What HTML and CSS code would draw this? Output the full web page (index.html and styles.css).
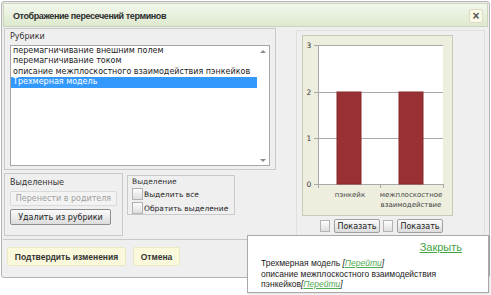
FILE: index.html
```html
<!DOCTYPE html>
<html lang="ru">
<head>
    <meta charset="UTF-8">
    <title>Отображение пересечений терминов</title>
    <link rel="stylesheet" href="styles.css">
</head>
<body>
    <div class="dialog">
        <div class="titlebar">
            <span class="title">Отображение пересечений терминов</span>
            <span class="close">&times;</span>
        </div>
        <div class="dialog-body">
            <div class="main">
                <div class="left">
                    <div class="box rubrics">
                        <div class="box-title">Рубрики</div>
                        <div class="listbox">
                            <ul class="items">
                                <li>перемагничивание внешним полем</li>
                                <li>перемагничивание током</li>
                                <li>описание межплоскостного взаимодействия пэнкейков</li>
                                <li class="selected">Трехмерная модель</li>
                            </ul>
                            <div class="scrollbar">
                                <span class="arrow up"></span>
                                <span class="arrow down"></span>
                            </div>
                        </div>
                    </div>
                    <div class="lower">
                        <div class="box picked">
                            <div class="box-title">Выделенные</div>
                            <button class="btn disabled">Перенести в родителя</button>
                            <button class="btn remove">Удалить из рубрики</button>
                        </div>
                        <div class="box selection">
                            <div class="box-title small">Выделение</div>
                            <label class="check-row"><span class="check"></span>Выделить все</label>
                            <label class="check-row"><span class="check"></span>Обратить выделение</label>
                        </div>
                    </div>
                </div>
                <div class="right">
                    <div class="chart">
                        <svg width="149" height="179" viewBox="0 0 149 179">
                            <rect x="15" y="9" width="125" height="139" fill="#fff"/>
                            <g stroke="#a9a9a9" stroke-width="1">
                                <line x1="11" y1="9.5" x2="140" y2="9.5"/>
                                <line x1="11" y1="56.5" x2="140" y2="56.5"/>
                                <line x1="11" y1="102.5" x2="140" y2="102.5"/>
                                <line x1="11" y1="148.5" x2="140" y2="148.5"/>
                                <line x1="15.5" y1="9" x2="15.5" y2="152"/>
                                <line x1="77.5" y1="148" x2="77.5" y2="152"/>
                                <line x1="140.5" y1="148" x2="140.5" y2="152"/>
                            </g>
                            <rect x="34" y="56" width="24" height="92" fill="#993034" stroke="#862a2d" stroke-width="1"/>
                            <rect x="96" y="56" width="24" height="92" fill="#993034" stroke="#862a2d" stroke-width="1"/>
                            <g class="axis-y">
                                <text x="6" y="12">3</text>
                                <text x="6" y="59">2</text>
                                <text x="6" y="105">1</text>
                                <text x="6" y="151">0</text>
                            </g>
                            <g class="axis-x">
                                <text x="47" y="161">пэнкейк</text>
                                <text x="108" y="161">межплоскостное</text>
                                <text x="108" y="171">взаимодействие</text>
                            </g>
                        </svg>
                    </div>
                    <div class="chart-controls">
                        <span class="check"></span>
                        <button class="btn show">Показать</button>
                        <span class="check"></span>
                        <button class="btn show">Показать</button>
                    </div>
                </div>
            </div>
            <div class="actions">
                <button class="action confirm">Подтвердить изменения</button>
                <button class="action cancel">Отмена</button>
            </div>
        </div>
    </div>

    <div class="popup">
        <div class="popup-head"><a class="close-link">Закрыть</a></div>
        <div class="popup-text">
            Трехмерная модель <span class="goto">[<a>Перейти</a>]</span><br>
            описание межплоскостного взаимодействия<br>
            пэнкейков<span class="goto">[<a>Перейти</a>]</span>
        </div>
    </div>
</body>
</html>
```

FILE: styles.css
```css
* {
    margin: 0;
    padding: 0;
    box-sizing: border-box;
}

body {
    font-family: "DejaVu Sans", Verdana, sans-serif;
    font-size: 8px;
    color: #333;
    background-color: #fff;
}

.dialog {
    margin: 1px 0 0 1px;
    width: 489px;
    height: 277px;
    padding: 1px;
    border: 1px solid #b4b4b4;
    border-radius: 3px;
    background-color: #efefef;
}

.titlebar {
    height: 24px;
    display: flex;
    align-items: center;
    justify-content: space-between;
    padding: 0 4px 0 9px;
    border: 1px solid #c9d6bb;
    background: linear-gradient(#f3f8ec, #dde9ce);
}

.title {
    margin-top: 1px;
    font-family: "Liberation Sans", Arial, sans-serif;
    font-weight: bold;
    font-size: 9px;
    letter-spacing: -0.4px;
    color: #2e2e2e;
}

.close {
    width: 14px;
    height: 14px;
    margin-top: 2px;
    display: flex;
    align-items: center;
    justify-content: center;
    border: 1px solid #dcdcc6;
    border-radius: 2px;
    background-color: #f9f9e6;
    font-family: "Liberation Sans", Arial, sans-serif;
    font-weight: bold;
    font-size: 12px;
    line-height: 1;
    color: #555;
}

.dialog-body {
    display: flex;
    flex-direction: column;
}

.main {
    height: 213px;
    display: flex;
    padding: 1px 0 0 1px;
    border-bottom: 1px solid #c9c9c9;
}

.left {
    width: 272px;
}

.box {
    border: 1px solid #c9c9c9;
}

.box-title {
    height: 16px;
    line-height: 16px;
    font-size: 8px;
    color: #333;
}

.rubrics {
    height: 142px;
    padding: 0 5px;
}

.listbox {
    height: 121px;
    display: flex;
    border: 1px solid #a6a6a6;
    background-color: #fff;
}

.items {
    flex: 1;
    list-style: none;
}

.items li {
    height: 10.4px;
    line-height: 10.4px;
    padding-left: 2px;
    font-size: 8px;
    color: #222;
    white-space: nowrap;
}

.items .selected {
    background-color: #3399ff;
    color: #fff;
}

.scrollbar {
    width: 12px;
    display: flex;
    flex-direction: column;
    justify-content: space-between;
    align-items: center;
    padding: 4px 0 3px;
}

.arrow {
    width: 0;
    height: 0;
    border-left: 3px solid transparent;
    border-right: 3px solid transparent;
}

.arrow.up {
    border-bottom: 3px solid #8c8c8c;
}

.arrow.down {
    border-top: 3px solid #8c8c8c;
}

.lower {
    display: flex;
    align-items: flex-start;
    margin-top: 3px;
}

.picked {
    width: 119px;
    height: 63px;
    padding: 0 5px;
}

.picked .box-title {
    height: 17px;
    line-height: 18px;
}

.btn {
    display: block;
    font-family: "DejaVu Sans", Verdana, sans-serif;
    font-size: 8px;
    color: #222;
    border: 1px solid #8e8e8e;
    border-radius: 2px;
    background: linear-gradient(#fbfbfb, #dcdcdc);
}

.btn.disabled {
    width: 107px;
    height: 15px;
    color: #a0a0a0;
    border-color: #dadada;
    background: #f3f3f3;
}

.btn.remove {
    width: 101px;
    height: 16px;
    margin-top: 3px;
}

.selection {
    width: 108px;
    height: 40px;
    margin: 2px 0 0 4px;
    padding: 0 4px;
}

.box-title.small {
    height: 11px;
    line-height: 12px;
    font-size: 7.5px;
}

.check-row {
    height: 14px;
    display: flex;
    align-items: center;
    font-size: 7.5px;
    color: #222;
    white-space: nowrap;
}

.check {
    width: 11px;
    height: 12px;
    margin-right: 1px;
    border: 1px solid #b3b3b3;
    background: linear-gradient(#fdfdfd, #dedede);
    flex-shrink: 0;
}

.right {
    width: 189px;
    height: 208px;
    margin: 2px 0 0 20px;
    padding: 4px 0 0 5px;
    border: 1px solid #e0e0e0;
}

.chart {
    width: 151px;
    height: 181px;
    border: 1px solid #c8c9b6;
    background-color: #eeeedf;
}

.chart svg {
    display: block;
}

.axis-y text {
    font-size: 7.5px;
    fill: #333;
    text-anchor: middle;
}

.axis-x text {
    font-size: 7px;
    fill: #444;
    text-anchor: middle;
}

.chart-controls {
    display: flex;
    align-items: center;
    margin-top: 3px;
    padding-left: 18px;
}

.chart-controls .check {
    width: 10px;
    height: 12px;
    margin-right: 4px;
}

.btn.show {
    width: 46px;
    height: 14px;
    margin-right: 3px;
    font-size: 8px;
    border-color: #a0a0a0;
}

.actions {
    display: flex;
    gap: 7px;
    padding: 7px 0 0 4px;
}

.action {
    height: 19px;
    font-family: "Liberation Sans", Arial, sans-serif;
    font-weight: bold;
    font-size: 8.5px;
    color: #333;
    border: 1px solid #ebe8c6;
    border-radius: 2px;
    background-color: #fbf9db;
}

.action.confirm {
    width: 119px;
}

.action.cancel {
    width: 47px;
}

.popup {
    position: absolute;
    left: 247px;
    top: 235px;
    width: 242px;
    height: 58px;
    padding: 5px 0 0 13px;
    border: 1px solid #a9a9a9;
    background-color: #fff;
    font-family: "Liberation Sans", Arial, sans-serif;
    box-shadow: 1px 1px 2px rgba(0, 0, 0, 0.15);
}

.popup-head {
    display: flex;
    justify-content: flex-end;
    padding-right: 26px;
    height: 15px;
}

.close-link {
    font-size: 11px;
    color: #44a344;
    text-decoration: underline;
}

.popup-text {
    margin-top: 2px;
    font-size: 8.5px;
    line-height: 10.5px;
    color: #222;
}

.goto {
    font-style: italic;
}

.goto a {
    color: #4fab4f;
    text-decoration: underline;
}
```
